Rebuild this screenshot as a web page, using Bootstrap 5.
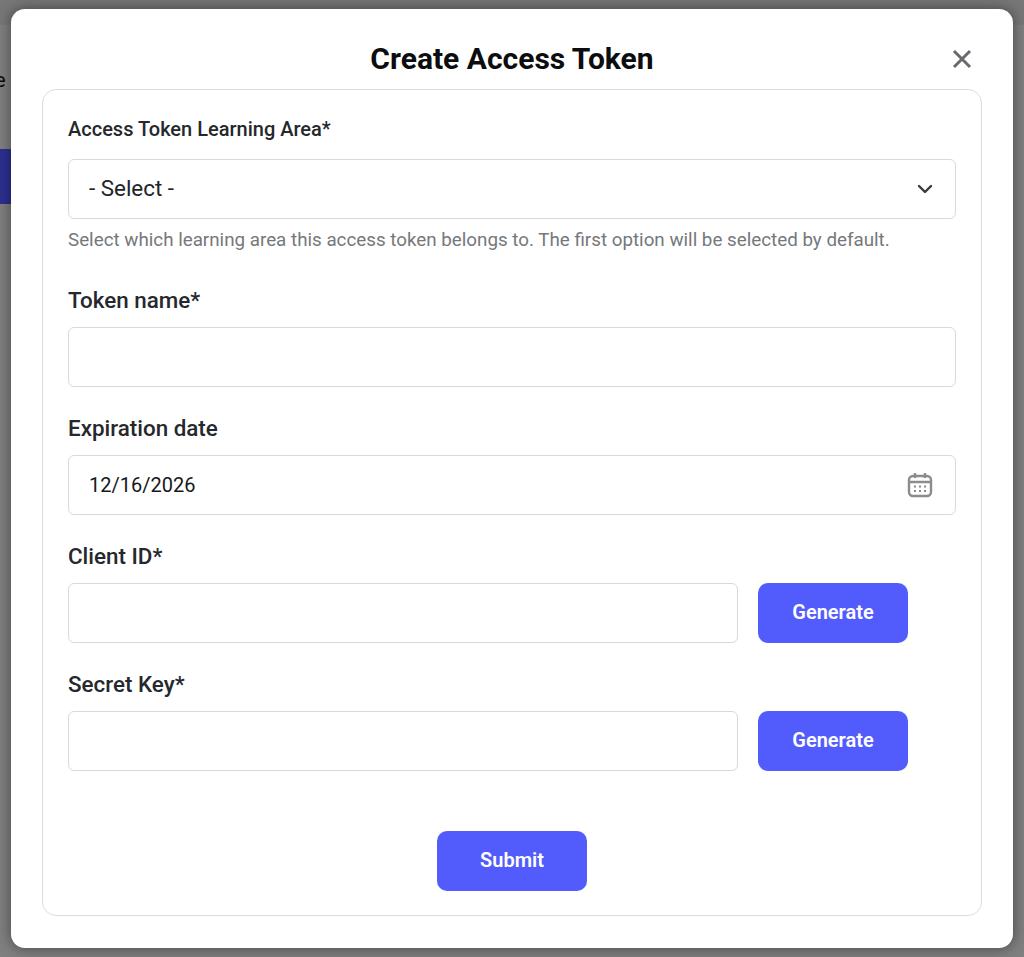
<!DOCTYPE html>
<html lang="en">
  <head>
    <meta charset="UTF-8" />
    <meta name="viewport" content="width=device-width, initial-scale=1.0" />
    <title>Create Access Token</title>
    <link href="https://cdn.jsdelivr.net/npm/bootstrap@5.3.3/dist/css/bootstrap.min.css" rel="stylesheet" />
    <style>
      html, body {
        height: 957px;
        overflow: hidden;
      }
      body {
        background: #7f7f7f;
        font-family: Roboto, "Liberation Sans", sans-serif;
        color: #212529;
        padding: 9px 11px;
        position: relative;
      }
      .page-topbar {
        position: absolute;
        left: 0;
        right: 0;
        top: 0;
        height: 25px;
        background: #777;
      }
      .page-letter {
        position: absolute;
        left: -5px;
        top: 66px;
        font-size: 20px;
        line-height: 28px;
        color: #0b0b0b;
      }
      .page-strip {
        position: absolute;
        left: 0;
        top: 149px;
        width: 20px;
        height: 55px;
        background: #2d2f8f;
      }
      .token-modal {
        position: relative;
        height: 939px;
        background: #fff;
        border-radius: 14px;
        padding: 0 31px;
        box-shadow: 0 0 14px rgba(0, 0, 0, 0.45);
      }
      .token-head {
        height: 80px;
        position: relative;
      }
      .token-title {
        font-size: 30px;
        font-weight: 700;
        height: 80px;
        margin: 0;
        color: #0c0d0f;
        line-height: 100px;
      }
      .token-close {
        position: absolute;
        right: 10px;
        top: 40px;
        width: 20px;
        height: 20px;
        padding: 0;
        border: 0;
        background: none;
        display: flex;
      }
      .token-card {
        height: 827px;
        border: 1px solid #dcdcdc;
        border-radius: 14px;
        padding: 25px 25px 0;
      }
      .token-label {
        display: block;
        font-size: 22.4px;
        font-weight: 500;
        line-height: 22px;
        margin: 0 0 16px;
        color: #25282c;
      }
      .token-label.is-small {
        font-size: 20px;
        line-height: 28px;
        margin-bottom: 16px;
      }
      .token-input,
      .token-input:focus {
        height: 60px;
        border: 1px solid #d9d9d9;
        border-radius: 6px;
        padding: 0 20px;
        font-size: 22.4px;
        color: #212529;
        box-shadow: none;
      }
      .token-date,
      .token-date:focus {
        font-size: 20px;
        color: #16181b;
      }
      .token-select {
        background-image: none;
        appearance: none;
      }
      .token-field {
        position: relative;
      }
      .field-icon {
        position: absolute;
        pointer-events: none;
        display: block;
      }
      .field-icon.chevron {
        right: 23px;
        top: 24px;
      }
      .field-icon.calendar {
        right: 23px;
        top: 17px;
      }
      .token-help {
        font-size: 18.8px;
        line-height: 26px;
        color: #75787b;
        margin: 8px 0 0;
      }
      .token-row {
        margin-bottom: 30px;
      }
      .token-row.is-first {
        margin-bottom: 36px;
      }
      .token-btn,
      .token-btn:hover {
        width: 150px;
        height: 60px;
        background: #525cfd;
        border: 0;
        border-radius: 10px;
        color: #fff;
        font-size: 20px;
        font-weight: 600;
        padding: 0 0 2px;
      }
      .token-short {
        width: 670px;
      }
      .token-pair {
        gap: 20px;
      }
      .token-submit {
        margin-top: 60px;
      }
    </style>
  </head>
  <body>
    <div class="page-topbar"></div>
    <div class="page-letter">e</div>
    <div class="page-strip"></div>

    <div class="token-modal">
      <div class="token-head text-center">
        <h1 class="token-title">Create Access Token</h1>
        <button type="button" class="token-close" aria-label="Close">
          <svg width="20" height="20" viewBox="0 0 20 20"><path d="M2 2 18 18M18 2 2 18" stroke="#666a6e" stroke-width="3" fill="none" /></svg>
        </button>
      </div>
      <form class="token-card">
        <div class="token-row is-first">
          <label class="token-label is-small" for="area">Access Token Learning Area*</label>
          <div class="token-field">
            <select id="area" class="form-select token-input token-select"><option>- Select -</option></select>
            <svg class="field-icon chevron" width="16" height="12" viewBox="0 0 16 12"><path d="M2 3 8 9 14 3" stroke="#343a40" stroke-width="2.400" fill="none" stroke-linecap="round" stroke-linejoin="round" /></svg>
          </div>
          <p class="token-help">Select which learning area this access token belongs to. The first option will be selected by default.</p>
        </div>
        <div class="token-row">
          <label class="token-label" for="name">Token name*</label>
          <input id="name" class="form-control token-input" type="text" />
        </div>
        <div class="token-row">
          <label class="token-label" for="exp">Expiration date</label>
          <div class="token-field">
            <input id="exp" class="form-control token-input token-date" type="text" value="12/16/2026" />
            <svg class="field-icon calendar" width="26" height="26" viewBox="0 0 26 26" fill="none" stroke="#8c8c8c" stroke-width="2.400"><rect x="2" y="4" width="22" height="20" rx="4" /><path d="M2 10H24M8 1V6M18 1V6" /><path d="M7 14.500H9M12 14.500H14M17 14.500H19M7 19H9M12 19H14M17 19H19" stroke-width="2" /></svg>
          </div>
        </div>
        <div class="token-row">
          <label class="token-label" for="client">Client ID*</label>
          <div class="d-flex token-pair">
            <input id="client" class="form-control token-input token-short" type="text" />
            <button type="button" class="btn token-btn">Generate</button>
          </div>
        </div>
        <div class="token-row">
          <label class="token-label" for="secret">Secret Key*</label>
          <div class="d-flex token-pair">
            <input id="secret" class="form-control token-input token-short" type="text" />
            <button type="button" class="btn token-btn">Generate</button>
          </div>
        </div>
        <div class="text-center token-submit">
          <button type="submit" class="btn token-btn">Submit</button>
        </div>
      </form>
    </div>

    <script src="https://cdn.jsdelivr.net/npm/bootstrap@5.3.3/dist/js/bootstrap.bundle.min.js"></script>
  </body>
</html>
